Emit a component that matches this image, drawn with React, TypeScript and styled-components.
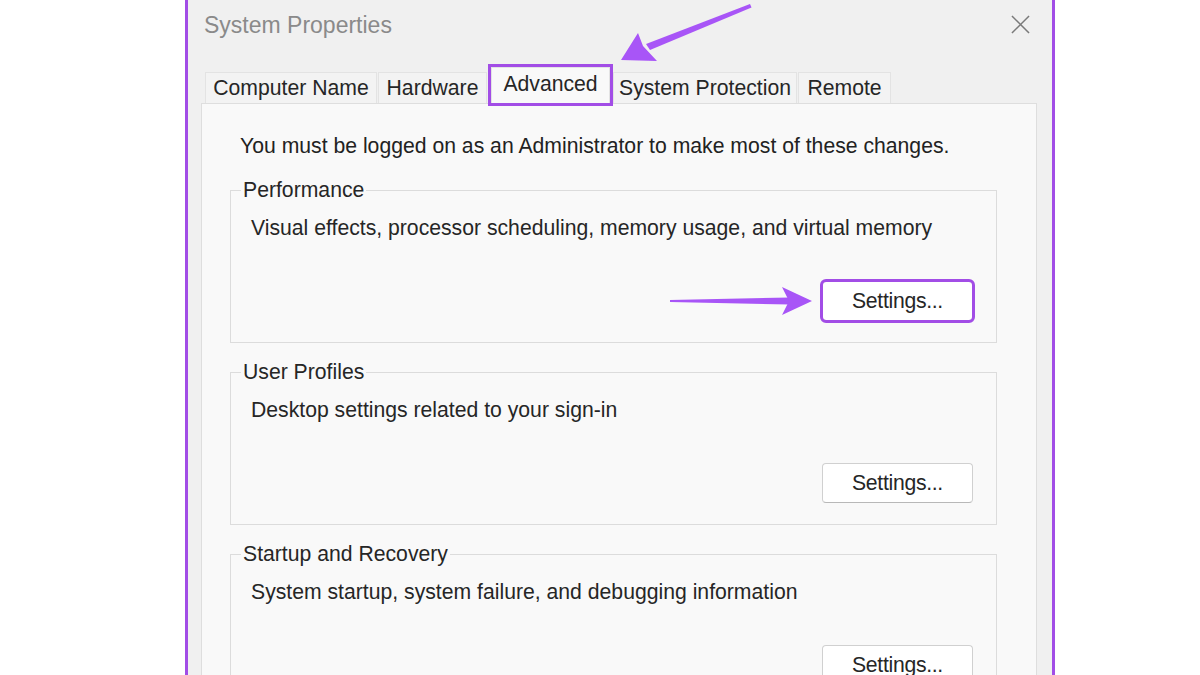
import React from "react";
import styled, { createGlobalStyle } from "styled-components";

const PURPLE = "#a24de6";
const ARROW = "#a855f7";
const FS = "21.2px";

const GlobalStyle = createGlobalStyle`
  html, body { margin: 0; padding: 0; background: #ffffff; }
  body { font-family: "Liberation Sans", Arial, sans-serif; }
  * { box-sizing: border-box; }
`;

const Page = styled.div`
  position: relative;
  width: 1200px;
  height: 675px;
  overflow: hidden;
  background: #ffffff;
`;

const Window = styled.div`
  margin-left: 185px;
  width: 870px;
  height: 720px;
  background: #f0f0f0;
  border-left: 3px solid ${PURPLE};
  border-right: 3px solid ${PURPLE};
  padding: 0 15px 0 13px;
  display: flex;
  flex-direction: column;
`;

const TitleBar = styled.div`
  height: 50px;
  flex-shrink: 0;
  display: flex;
  align-items: center;
  justify-content: space-between;
  padding: 0 7px 0 3px;
`;

const Title = styled.div`
  font-size: 23px;
  color: #8a8a8a;
`;

const CloseIcon = styled.svg`
  width: 19px;
  height: 19px;
  margin-bottom: 2px;
`;

const TabStrip = styled.div`
  height: 53px;
  flex-shrink: 0;
  display: flex;
  align-items: flex-end;
  padding-left: 4px;
`;

const Tab = styled.div<{ $active?: boolean; $w: number }>`
  width: ${(p) => p.$w}px;
  height: ${(p) => (p.$active ? 36 : 31)}px;
  display: flex;
  align-items: center;
  justify-content: center;
  font-size: ${FS};
  color: #262626;
  background: ${(p) => (p.$active ? "#f9f9f9" : "#f3f3f3")};
  border: 1px solid #e3e3e3;
  border-bottom: none;
  margin: ${(p) => (p.$active ? "0 3px" : "0 1px 0 0")};
  outline: ${(p) => (p.$active ? `3px solid ${PURPLE}` : "none")};
  position: relative;
  z-index: ${(p) => (p.$active ? 2 : 0)};
  padding-bottom: ${(p) => (p.$active ? 4 : 0)}px;
  white-space: nowrap;
`;

const Panel = styled.div`
  flex: 1;
  background: #f9f9f9;
  border: 1px solid #dedede;
  padding: 30px 39px 0 28px;
  display: flex;
  flex-direction: column;
  gap: 17px;
`;

const Intro = styled.div`
  font-size: ${FS};
  line-height: 24px;
  color: #222;
  padding-left: 10px;
  margin-bottom: 3px;
  white-space: nowrap;
`;

const Group = styled.fieldset`
  margin: 0;
  padding: 14px 23px 21px 20px;
  border: 1px solid #dcdcdc;
  min-width: 0;
  display: flex;
  flex-direction: column;
`;

const Legend = styled.legend`
  font-size: ${FS};
  line-height: 24px;
  color: #262626;
  padding: 0 2px;
  margin-left: -10px;
`;

const Desc = styled.div`
  font-size: ${FS};
  line-height: 24px;
  color: #262626;
  white-space: nowrap;
`;

const Button = styled.button<{ $highlight?: boolean }>`
  align-self: flex-end;
  margin-top: 41px;
  width: 151px;
  height: 40px;
  font-family: inherit;
  font-size: ${FS};
  color: #262626;
  letter-spacing: -0.3px;
  background: #ffffff;
  border: 1px solid #d0d0d0;
  border-bottom-color: #b8b8b8;
  border-radius: 4px;
  outline: ${(p) => (p.$highlight ? `3px solid ${PURPLE}` : "none")};
  outline-offset: -1px;
`;

const Overlay = styled.svg`
  position: absolute;
  left: 0;
  top: 0;
  width: 1200px;
  height: 675px;
  pointer-events: none;
`;

const groups = [
  {
    title: "Performance",
    desc: "Visual effects, processor scheduling, memory usage, and virtual memory",
    highlight: true,
  },
  { title: "User Profiles", desc: "Desktop settings related to your sign-in" },
  {
    title: "Startup and Recovery",
    desc: "System startup, system failure, and debugging information",
  },
];

const tabs = [
  { label: "Computer Name", w: 172 },
  { label: "Hardware", w: 109 },
  { label: "Advanced", w: 119, active: true },
  { label: "System Protection", w: 184 },
  { label: "Remote", w: 93 },
];

export default function App() {
  return (
    <Page>
      <GlobalStyle />
      <Window>
        <TitleBar>
          <Title>System Properties</Title>
          <CloseIcon viewBox="0 0 20 20">
            <path d="M1 1 L19 19 M19 1 L1 19" stroke="#7a7a7a" strokeWidth="1.6" fill="none" />
          </CloseIcon>
        </TitleBar>
        <TabStrip>
          {tabs.map((t) => (
            <Tab key={t.label} $active={t.active} $w={t.w}>
              {t.label}
            </Tab>
          ))}
        </TabStrip>
        <Panel>
          <Intro>You must be logged on as an Administrator to make most of these changes.</Intro>
          {groups.map((g) => (
            <Group key={g.title}>
              <Legend>{g.title}</Legend>
              <Desc>{g.desc}</Desc>
              <Button $highlight={g.highlight}>Settings...</Button>
            </Group>
          ))}
        </Panel>
      </Window>
      <Overlay viewBox="0 0 1200 675">
        <path d="M670 300 L790 297.5 L790 304.5 L670 302 Z" fill={ARROW} />
        <path d="M812 301 L782 287 L789 301 L782 315 Z" fill={ARROW} />
        <path d="M750 4 L751.5 7.5 L650 50 L646 44 Z" fill={ARROW} />
        <path d="M621 60 L638 33 L643 46 L657 61 Z" fill={ARROW} />
      </Overlay>
    </Page>
  );
}
